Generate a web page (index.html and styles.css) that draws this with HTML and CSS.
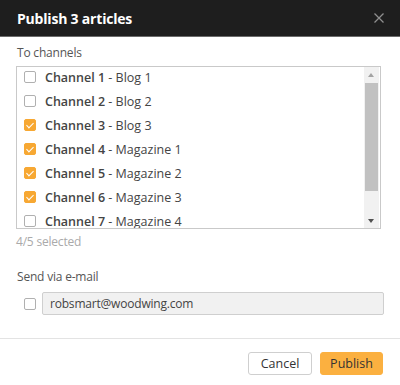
FILE: index.html
```html
<!DOCTYPE html>
<html>
<head>
<meta charset="utf-8">
<link rel="stylesheet" href="styles.css">
</head>
<body>
<div class="dialog">
  <div class="header">
    <div class="title">Publish 3 articles</div>
    <svg class="close" width="10" height="10" viewBox="0 0 10 10"><path d="M0.5 0.5 L9.5 9.5 M9.5 0.5 L0.5 9.5" stroke="#8f8f8f" stroke-width="1.3" fill="none"/></svg>
  </div>
  <div class="content">
    <div class="label">To channels</div>
    <div class="listbox">
      <div class="items">
        <div class="item"><span class="cb"></span><span><b>Channel 1</b> - Blog 1</span></div>
        <div class="item"><span class="cb"></span><span><b>Channel 2</b> - Blog 2</span></div>
        <div class="item"><span class="cb on"></span><span><b>Channel 3</b> - Blog 3</span></div>
        <div class="item"><span class="cb on"></span><span><b>Channel 4</b> - Magazine 1</span></div>
        <div class="item"><span class="cb on"></span><span><b>Channel 5</b> - Magazine 2</span></div>
        <div class="item"><span class="cb on"></span><span><b>Channel 6</b> - Magazine 3</span></div>
        <div class="item"><span class="cb"></span><span><b>Channel 7</b> - Magazine 4</span></div>
      </div>
      <div class="scrollbar">
        <div class="arrow up"></div>
        <div class="track"><div class="thumb"></div></div>
        <div class="arrow down"></div>
      </div>
    </div>
    <div class="count">4/5 selected</div>
    <div class="label email-label">Send via e-mail</div>
    <div class="email-row">
      <span class="cb"></span>
      <div class="input">robsmart@woodwing.com</div>
    </div>
  </div>
  <div class="footer">
    <button class="btn">Cancel</button>
    <button class="btn primary">Publish</button>
  </div>
</div>
</body>
</html>
```

FILE: styles.css
```css
* { box-sizing: border-box; }
html, body { margin: 0; padding: 0; background: #fff; }
body {
  font-family: "Open Sans", "Noto Sans", sans-serif;
  color: #333;
  width: 400px;
  height: 385px;
  overflow: hidden;
}
.dialog { width: 400px; }
.header {
  height: 37px;
  background: #1e1e1e;
  border-bottom: 1px solid #6b6b6b;
  display: flex;
  align-items: center;
  justify-content: space-between;
  padding: 0 16px 0 17px;
}
.title {
  color: #fff;
  font-weight: 700;
  font-size: 14px;
  letter-spacing: -0.2px;
}
.close { display: block; }
.content { padding: 7px 17px 0 16px; }
.label {
  font-size: 12px;
  letter-spacing: -0.2px;
  color: #555;
  padding-left: 1px;
  line-height: 18px;
}
.listbox {
  margin-top: 4px;
  height: 163px;
  width: 365px;
  border: 1px solid #c9c9c9;
  display: flex;
  overflow: hidden;
}
.items { flex: 1; margin-top: -2px; }
.item {
  height: 24px;
  display: flex;
  align-items: center;
  font-size: 12.5px;
  color: #444;
  padding-left: 7px;
  white-space: nowrap;
}
.item b { font-weight: 600; }
.cb {
  display: inline-block;
  width: 12px;
  height: 12px;
  border: 1px solid #b0b0b0;
  border-radius: 2px;
  background: #fff;
  margin-right: 9px;
  flex: none;
  position: relative;
}
.cb.on {
  background: #f7a833;
  border-color: #f7a833;
}
.cb.on::after {
  content: "";
  position: absolute;
  left: 3px;
  top: 1px;
  width: 3px;
  height: 6px;
  border: solid #fff;
  border-width: 0 1.5px 1.5px 0;
  transform: rotate(45deg);
}
.scrollbar {
  width: 15px;
  background: #f1f1f1;
  display: flex;
  flex-direction: column;
  margin-right: 1px;
  flex: none;
}
.arrow { height: 16px; position: relative; }
.arrow::after {
  content: "";
  position: absolute;
  left: 4px;
  width: 0; height: 0;
  border-left: 3.5px solid transparent;
  border-right: 3.5px solid transparent;
}
.arrow.up::after { top: 6px; border-bottom: 4px solid #a3a3a3; }
.arrow.down::after { top: 7px; border-top: 4px solid #505050; }
.track { flex: 1; position: relative; }
.thumb {
  background: #c1c1c1;
  height: 108px;
  margin: 0 1px;
}
.count {
  font-size: 12px;
  letter-spacing: -0.2px;
  color: #aaa;
  margin-top: 4px;
  line-height: 18px;
}
.email-label { margin-top: 17px; }
.email-row {
  display: flex;
  align-items: center;
  margin-top: 6px;
  padding-left: 8px;
}
.email-row .cb { margin-right: 6px; }
.input {
  flex: 1;
  height: 23px;
  background: #f1f1f1;
  border: 1px solid #cfcfcf;
  border-radius: 2px;
  font-size: 12px;
  letter-spacing: -0.2px;
  color: #444;
  padding-left: 7px;
  display: flex;
  align-items: center;
  margin-right: -1px;
}
.footer {
  margin-top: 23px;
  border-top: 1px solid #e3e3e3;
  display: flex;
  justify-content: flex-end;
  gap: 8px;
  padding: 13px 17px 0 0;
}
.btn {
  font-family: inherit;
  font-size: 12.5px;
  color: #333;
  height: 23px;
  padding: 0;
  width: 64px;
  background: #fff;
  border: 1px solid #cfcfcf;
  border-radius: 3px;
}
.btn.primary {
  width: 63px;
  background: #fbb040;
  border-color: #fbb040;
}
```
